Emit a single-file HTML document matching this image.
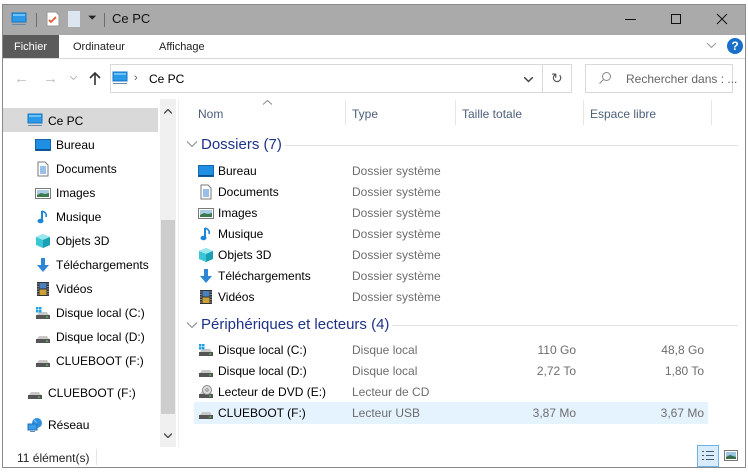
<!DOCTYPE html>
<html><head><meta charset="utf-8"><style>
*{margin:0;padding:0;box-sizing:border-box}
body{width:748px;height:472px;background:#fff;font-family:"Liberation Sans",sans-serif;font-size:12px;color:#000;position:relative;overflow:hidden}
.a{position:absolute;white-space:nowrap}
.ic{position:absolute;width:16px;height:16px}
.g{color:#6d6d6d}
.h{color:#4c607a}
.grp{color:#1e3287;font-size:15px}
.r{text-align:right;width:80px}
</style></head><body>
<svg width="0" height="0" style="position:absolute">
<defs>
<symbol id="mon" viewBox="0 0 16 16"><rect x="1" y="2" width="14" height="9" fill="#2a9ae8" stroke="#1775c4" stroke-width="1"/><rect x="2" y="3" width="12" height="2" fill="#6cc2f7"/><rect x="1" y="13" width="14" height="1" fill="#6a8aa6"/></symbol>
<symbol id="bur" viewBox="0 0 16 16"><rect x="0.5" y="2.5" width="15" height="11" fill="#1e8fe3" stroke="#1466ad"/><rect x="1" y="12" width="14" height="1.5" fill="#0b4f8a"/></symbol>
<symbol id="doc" viewBox="0 0 16 16"><path d="M3 1h7l3 3v11H3z" fill="#fff" stroke="#7a7a7a"/><path d="M5 6h6M5 8h6M5 10h6M5 12h6" stroke="#2f7fd0"/></symbol>
<symbol id="img" viewBox="0 0 16 16"><rect x="0.5" y="3.5" width="15" height="10" fill="#fff" stroke="#7a7a7a"/><rect x="2" y="5" width="12" height="7" fill="#a9cbe6"/><path d="M2 10l4-2 4 1 4-1v4H2z" fill="#3c7a4e"/></symbol>
<symbol id="mus" viewBox="0 0 16 16"><path d="M7 2v9" stroke="#1e86d8" stroke-width="2"/><ellipse cx="5.5" cy="12" rx="3" ry="2.3" fill="#1e86d8"/><path d="M7 2c3 1 5 3 4 6" stroke="#1e86d8" stroke-width="1.6" fill="none"/></symbol>
<symbol id="cube" viewBox="0 0 16 16"><path d="M8 1l7 3v8l-7 3-7-3V4z" fill="#3bc6d6"/><path d="M1 4l7 3 7-3-7-3z" fill="#9ae8ef"/><path d="M8 7v8l7-3V4z" fill="#1a9fb4"/></symbol>
<symbol id="dl" viewBox="0 0 16 16"><path d="M6 1h4v7h4l-6 7-6-7h4z" fill="#2e86d6"/></symbol>
<symbol id="vid" viewBox="0 0 16 16"><rect x="2" y="1" width="12" height="14" fill="#333"/><rect x="4.5" y="2" width="7" height="5.5" fill="#4a7fc0"/><rect x="4.5" y="8.5" width="7" height="5.5" fill="#c9a23a"/><path d="M3 2.5v1M3 5v1M3 7.5v1M3 10v1M3 12.5v1M13 2.5v1M13 5v1M13 7.5v1M13 10v1M13 12.5v1" stroke="#ddd"/></symbol>
<symbol id="drv" viewBox="0 0 16 16"><path d="M2 10l2-3h8l2 3z" fill="#c8c8c8"/><rect x="1" y="10" width="14" height="4" fill="#555"/><rect x="11" y="11.5" width="2" height="1" fill="#5fd35f"/></symbol>
<symbol id="drc" viewBox="0 0 16 16"><use href="#drv"/><rect x="1" y="2" width="2.5" height="2.5" fill="#1ba1e2"/><rect x="4" y="2" width="2.5" height="2.5" fill="#1ba1e2"/><rect x="1" y="5" width="2.5" height="2.5" fill="#1ba1e2"/><rect x="4" y="5" width="2.5" height="2.5" fill="#1ba1e2"/></symbol>
<symbol id="dvd" viewBox="0 0 16 16"><use href="#drv"/><circle cx="9" cy="6" r="4.5" fill="#ddd" stroke="#888"/><circle cx="9" cy="6" r="1.2" fill="#fff" stroke="#888"/></symbol>
<symbol id="net" viewBox="0 0 16 16"><circle cx="10" cy="6" r="5" fill="#2d8fe0"/><path d="M7 3c2 1 3 3 2 5" stroke="#7cc4f5" fill="none"/><rect x="1" y="7" width="9" height="6" fill="#3a9de8" stroke="#1a6fb8"/><rect x="3" y="14" width="5" height="1" fill="#6a8aa6"/></symbol>
</defs></svg>

<div class="a" style="left:2px;top:4px;width:744px;height:464px;border:1px solid #8a8a8a"></div>
<div class="a" style="left:3px;top:5px;width:742px;height:30px;background:#aaaaaa"></div>
<svg class="ic" style="left:11px;top:11px"><use href="#mon"/></svg>
<div class="a" style="left:36px;top:13px;width:1px;height:14px;background:#6e6e6e"></div>
<svg class="a" style="left:46px;top:11px" width="14" height="16"><path d="M1 1h9l3 3v11H1z" fill="#fff" stroke="#999"/><path d="M3 9l2 2 5-5" stroke="#e0522b" stroke-width="1.6" fill="none"/></svg>
<div class="a" style="left:68px;top:11px;width:12px;height:16px;background:#dde6f0"></div>
<div class="a" style="left:88px;top:12px;font-size:11px;color:#222">⏷</div>
<div class="a" style="left:104px;top:13px;width:1px;height:14px;background:#6e6e6e"></div>
<div class="a" style="left:112px;top:11px;color:#111;font-size:13px">Ce PC</div>
<div class="a" style="left:625px;top:19px;width:11px;height:1px;background:#111"></div>
<div class="a" style="left:671px;top:14px;width:10px;height:10px;border:1px solid #111"></div>
<svg class="a" style="left:716px;top:13px" width="12" height="12"><path d="M1 1l10 10M11 1L1 11" stroke="#111"/></svg>

<div class="a" style="left:3px;top:35px;width:56px;height:23px;background:#5b5b5b"></div>
<div class="a" style="left:14px;top:41px;color:#fff;font-size:11px">Fichier</div>
<div class="a" style="left:73px;top:41px;font-size:11px;color:#222">Ordinateur</div>
<div class="a" style="left:159px;top:41px;font-size:11px;color:#222">Affichage</div>
<svg class="a" style="left:707px;top:43px" width="9" height="6"><path d="M0 0l4.5 4.5L9 0" stroke="#999" fill="none"/></svg>
<div class="a" style="left:727px;top:38px;width:16px;height:16px;border-radius:50%;background:#1a6fc9;color:#fff;font-weight:bold;font-size:12px;text-align:center;line-height:16px">?</div>
<div class="a" style="left:3px;top:58px;width:742px;height:1px;background:#dadada"></div>

<div class="a" style="left:14px;top:70px;font-size:15px;color:#bcbcbc">←</div>
<div class="a" style="left:43px;top:70px;font-size:15px;color:#bcbcbc">→</div>
<svg class="a" style="left:70px;top:76px" width="7" height="5"><path d="M0 0l3.5 3.5L7 0" stroke="#bcbcbc" fill="none"/></svg>
<svg class="a" style="left:89px;top:71px" width="12" height="15"><path d="M6 14V2M1 7l5-5 5 5" stroke="#333" stroke-width="1.6" fill="none"/></svg>

<div class="a" style="left:110px;top:64px;width:462px;height:29px;border:1px solid #d9d9d9"></div>
<svg class="ic" style="left:112px;top:70px"><use href="#mon"/></svg>
<div class="a" style="left:134px;top:72px;font-size:11px;color:#555">›</div>
<div class="a" style="left:149px;top:72px">Ce PC</div>
<svg class="a" style="left:524px;top:77px" width="9" height="6"><path d="M0 0l4.5 4.5L9 0" stroke="#444" stroke-width="1.5" fill="none"/></svg>
<div class="a" style="left:542px;top:64px;width:1px;height:29px;background:#d9d9d9"></div>
<div class="a" style="left:551px;top:70px;font-size:14px;color:#555">↻</div>
<div class="a" style="left:585px;top:64px;width:148px;height:29px;border:1px solid #d9d9d9"></div>
<svg class="a" style="left:598px;top:71px" width="14" height="14"><circle cx="8.5" cy="5.5" r="4" stroke="#888" fill="none"/><path d="M5.5 8.5l-4 4" stroke="#888"/></svg>
<div class="a" style="left:626px;top:72px;color:#666">Rechercher dans : ...</div>

<div class="a" style="left:3px;top:108px;width:155px;height:24px;background:#d9d9d9"></div>
<div class="a" style="left:160px;top:99px;width:16px;height:348px;background:#f0f0f0"></div>
<div class="a" style="left:161px;top:220px;width:14px;height:194px;background:#cdcdcd"></div>
<svg class="a" style="left:164px;top:109px" width="8" height="5"><path d="M0 4.5l4-4 4 4" stroke="#555" stroke-width="1.5" fill="none"/></svg>
<svg class="a" style="left:164px;top:433px" width="8" height="5"><path d="M0 .5l4 4 4-4" stroke="#555" stroke-width="1.5" fill="none"/></svg>
<div class="a" style="left:178px;top:99px;width:1px;height:348px;background:#f0f0f0"></div>

<svg class="ic" style="left:27px;top:112px"><use href="#mon"/></svg><div class="a" style="left:48px;top:114px">Ce PC</div>
<svg class="ic" style="left:35px;top:137px"><use href="#bur"/></svg><div class="a" style="left:56px;top:138px">Bureau</div>
<svg class="ic" style="left:35px;top:161px"><use href="#doc"/></svg><div class="a" style="left:56px;top:162px">Documents</div>
<svg class="ic" style="left:35px;top:185px"><use href="#img"/></svg><div class="a" style="left:56px;top:186px">Images</div>
<svg class="ic" style="left:35px;top:209px"><use href="#mus"/></svg><div class="a" style="left:56px;top:210px">Musique</div>
<svg class="ic" style="left:35px;top:233px"><use href="#cube"/></svg><div class="a" style="left:56px;top:234px">Objets 3D</div>
<svg class="ic" style="left:35px;top:257px"><use href="#dl"/></svg><div class="a" style="left:56px;top:258px">Téléchargements</div>
<svg class="ic" style="left:35px;top:281px"><use href="#vid"/></svg><div class="a" style="left:56px;top:282px">Vidéos</div>
<svg class="ic" style="left:35px;top:305px"><use href="#drc"/></svg><div class="a" style="left:56px;top:306px">Disque local (C:)</div>
<svg class="ic" style="left:35px;top:329px"><use href="#drv"/></svg><div class="a" style="left:56px;top:330px">Disque local (D:)</div>
<svg class="ic" style="left:35px;top:353px"><use href="#drv"/></svg><div class="a" style="left:56px;top:354px">CLUEBOOT (F:)</div>
<svg class="ic" style="left:27px;top:385px"><use href="#drv"/></svg><div class="a" style="left:48px;top:386px">CLUEBOOT (F:)</div>
<svg class="ic" style="left:27px;top:417px"><use href="#net"/></svg><div class="a" style="left:48px;top:418px">Réseau</div>

<svg class="a" style="left:263px;top:100px" width="9" height="5"><path d="M0 4.5l4.5-4 4.5 4" stroke="#888" fill="none"/></svg>
<div class="a h" style="left:198px;top:107px">Nom</div>
<div class="a h" style="left:352px;top:107px">Type</div>
<div class="a h" style="left:462px;top:107px">Taille totale</div>
<div class="a h" style="left:590px;top:107px">Espace libre</div>
<div class="a" style="left:345px;top:100px;width:1px;height:25px;background:#e5e5e5"></div>
<div class="a" style="left:455px;top:100px;width:1px;height:25px;background:#e5e5e5"></div>
<div class="a" style="left:583px;top:100px;width:1px;height:25px;background:#e5e5e5"></div>
<div class="a" style="left:711px;top:100px;width:1px;height:25px;background:#e5e5e5"></div>

<svg class="a" style="left:187px;top:141px" width="10" height="6"><path d="M0 .5l5 5 5-5" stroke="#888" fill="none"/></svg>
<div class="a grp" style="left:201px;top:136px">Dossiers (7)</div>
<div class="a" style="left:285px;top:145px;width:453px;height:1px;background:#e2e2e2"></div>

<svg class="ic" style="left:198px;top:163px"><use href="#bur"/></svg><div class="a" style="left:218px;top:164px">Bureau</div><div class="a g" style="left:352px;top:164px">Dossier système</div>
<svg class="ic" style="left:198px;top:184px"><use href="#doc"/></svg><div class="a" style="left:218px;top:185px">Documents</div><div class="a g" style="left:352px;top:185px">Dossier système</div>
<svg class="ic" style="left:198px;top:205px"><use href="#img"/></svg><div class="a" style="left:218px;top:206px">Images</div><div class="a g" style="left:352px;top:206px">Dossier système</div>
<svg class="ic" style="left:198px;top:226px"><use href="#mus"/></svg><div class="a" style="left:218px;top:227px">Musique</div><div class="a g" style="left:352px;top:227px">Dossier système</div>
<svg class="ic" style="left:198px;top:247px"><use href="#cube"/></svg><div class="a" style="left:218px;top:248px">Objets 3D</div><div class="a g" style="left:352px;top:248px">Dossier système</div>
<svg class="ic" style="left:198px;top:268px"><use href="#dl"/></svg><div class="a" style="left:218px;top:269px">Téléchargements</div><div class="a g" style="left:352px;top:269px">Dossier système</div>
<svg class="ic" style="left:198px;top:289px"><use href="#vid"/></svg><div class="a" style="left:218px;top:290px">Vidéos</div><div class="a g" style="left:352px;top:290px">Dossier système</div>

<svg class="a" style="left:187px;top:322px" width="10" height="6"><path d="M0 .5l5 5 5-5" stroke="#888" fill="none"/></svg>
<div class="a grp" style="left:201px;top:316px">Périphériques et lecteurs (4)</div>
<div class="a" style="left:392px;top:325px;width:346px;height:1px;background:#e2e2e2"></div>

<div class="a" style="left:194px;top:402px;width:514px;height:22px;background:#e5f3ff"></div>
<svg class="ic" style="left:198px;top:342px"><use href="#drc"/></svg><div class="a" style="left:218px;top:343px">Disque local (C:)</div><div class="a g" style="left:352px;top:343px">Disque local</div><div class="a g r" style="left:496px;top:343px">110 Go</div><div class="a g r" style="left:624px;top:343px">48,8 Go</div>
<svg class="ic" style="left:198px;top:363px"><use href="#drv"/></svg><div class="a" style="left:218px;top:364px">Disque local (D:)</div><div class="a g" style="left:352px;top:364px">Disque local</div><div class="a g r" style="left:496px;top:364px">2,72 To</div><div class="a g r" style="left:624px;top:364px">1,80 To</div>
<svg class="ic" style="left:198px;top:384px"><use href="#dvd"/></svg><div class="a" style="left:218px;top:385px">Lecteur de DVD (E:)</div><div class="a g" style="left:352px;top:385px">Lecteur de CD</div>
<svg class="ic" style="left:198px;top:405px"><use href="#drv"/></svg><div class="a" style="left:218px;top:406px">CLUEBOOT (F:)</div><div class="a g" style="left:352px;top:406px">Lecteur USB</div><div class="a g r" style="left:496px;top:406px">3,87 Mo</div><div class="a g r" style="left:624px;top:406px">3,67 Mo</div>

<div class="a" style="left:17px;top:451px;color:#222">11 élément(s)</div>
<div class="a" style="left:96px;top:449px;width:1px;height:16px;background:#e5e5e5"></div>
<div class="a" style="left:697px;top:445px;width:22px;height:22px;border:1px solid #6fb3e6;background:#d8ecfb"></div>
<svg class="a" style="left:701px;top:450px" width="14" height="12"><path d="M1 1.5h2M1 5.5h2M1 9.5h2M5 1.5h8M5 5.5h8M5 9.5h8" stroke="#4a5a70"/></svg>
<svg class="a" style="left:724px;top:450px" width="14" height="12"><rect x=".5" y=".5" width="13" height="10" fill="#fff" stroke="#777"/><rect x="2" y="2" width="10" height="7" fill="#9cc4e4"/><path d="M2 7l4-2 6 2v2H2z" fill="#3a6e4a"/></svg>
</body></html>
